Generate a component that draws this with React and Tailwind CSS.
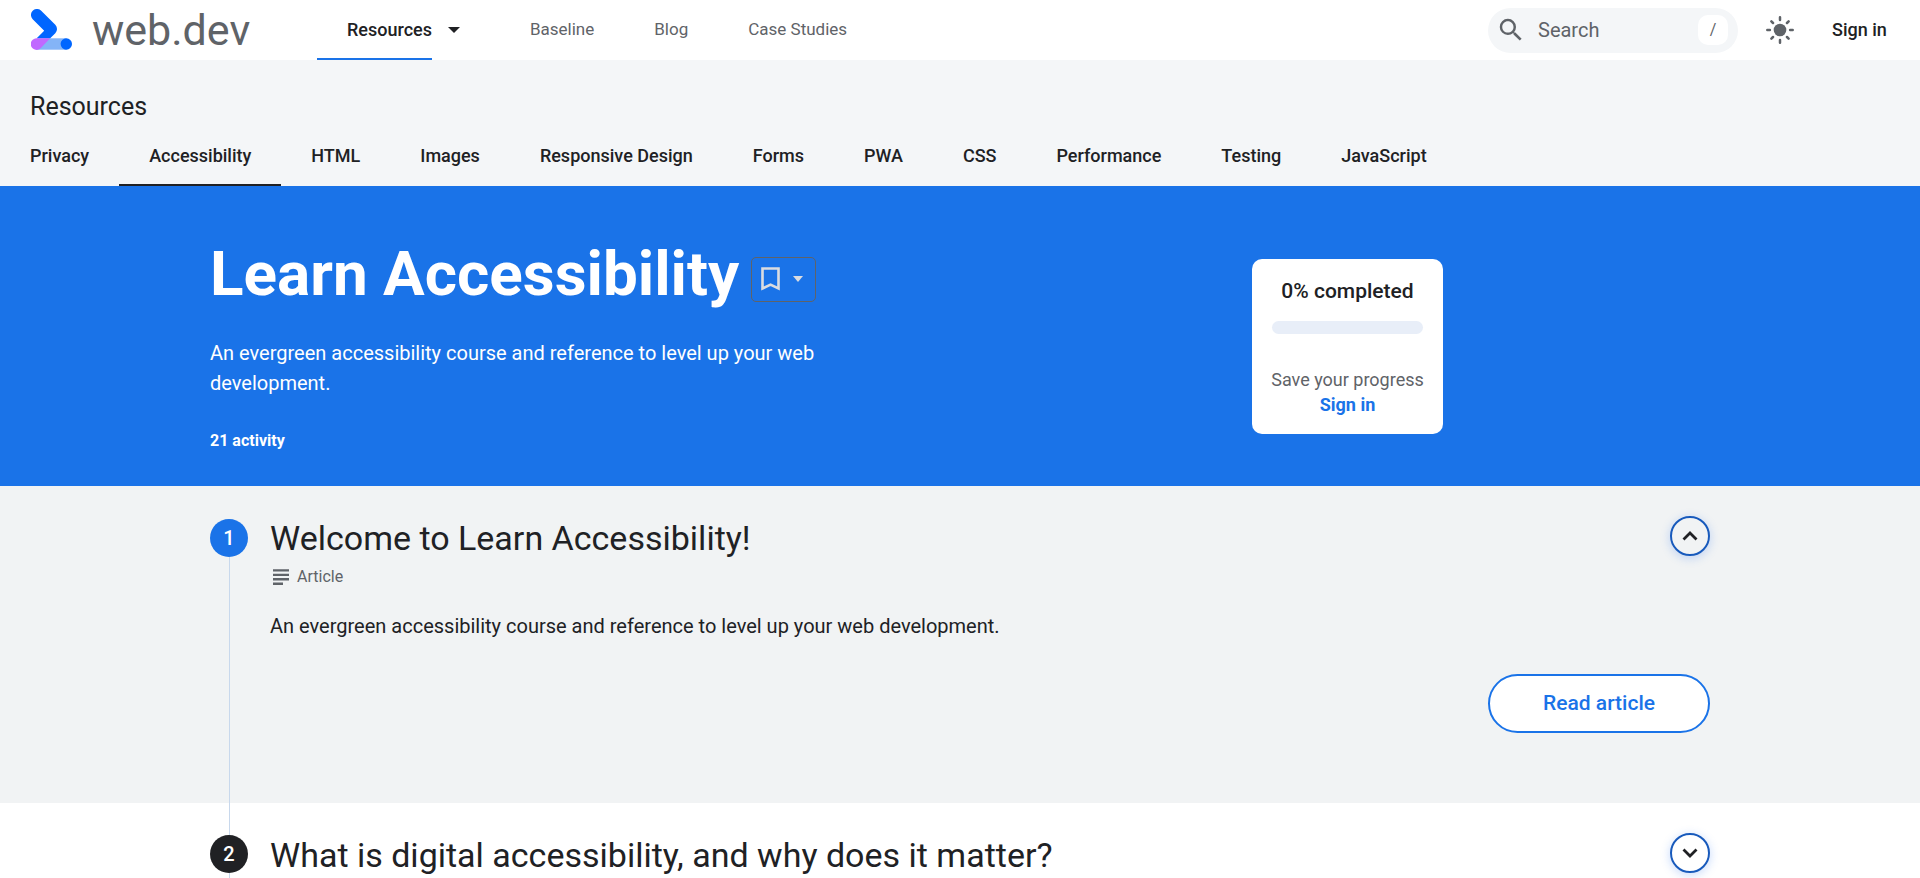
const TOPICS = [
  'Privacy',
  'Accessibility',
  'HTML',
  'Images',
  'Responsive Design',
  'Forms',
  'PWA',
  'CSS',
  'Performance',
  'Testing',
  'JavaScript',
];

const STEPS = [
  {
    number: 1,
    title: 'Welcome to Learn Accessibility!',
    kind: 'Article',
    text: 'An evergreen accessibility course and reference to level up your web development.',
    open: true,
  },
  {
    number: 2,
    title: 'What is digital accessibility, and why does it matter?',
    open: false,
  },
];

function Logo() {
  return (
    <svg className="mb-[2px]" width="41" height="41" viewBox="0 0 41 41" aria-hidden="true">
      <path d="M6 29.3H35.2V40.7H6z" fill="#84b4f7" />
      <path
        d="M1.7 10.2A6 6 0 0 1 10.2 1.7L24.3 15.8A6 6 0 0 1 24.3 24.2L19.2 29.3H5.7L13.2 21.8V21.7z"
        fill="#0066ff"
      />
      <path d="M5.8 29.3H19.2L9.8 39A5.8 5.8 0 1 1 5.8 29.3z" fill="#c069ff" />
      <circle cx="35.3" cy="35" r="5.7" fill="#0066ff" />
    </svg>
  );
}

function Caret({ className }) {
  return (
    <svg className={className} width="12" height="6" viewBox="0 0 12 6" aria-hidden="true">
      <path d="M0 0H12L6 6z" fill="currentColor" />
    </svg>
  );
}

function SearchIcon() {
  return (
    <svg width="30" height="30" viewBox="0 0 24 24" fill="currentColor" aria-hidden="true">
      <path d="M15.5 14h-.79l-.28-.27A6.47 6.47 0 0 0 16 9.5 6.5 6.5 0 1 0 9.5 16c1.61 0 3.09-.59 4.23-1.57l.27.28v.79l5 4.99L20.49 19l-4.99-5zm-6 0C7.01 14 5 11.99 5 9.5S7.01 5 9.5 5 14 7.01 14 9.5 11.99 14 9.5 14z" />
    </svg>
  );
}

function SunIcon() {
  return (
    <svg width="30" height="30" viewBox="0 0 30 30" aria-hidden="true">
      <circle cx="15" cy="15" r="6.3" fill="currentColor" />
      <path
        d="M15 2.3V4.9M15 25.1V27.7M2.3 15H4.9M25.1 15H27.7M6.4 6.4L8 8M22 22L23.6 23.6M6.4 23.6L8 22M22 8L23.6 6.4"
        stroke="currentColor"
        strokeWidth="2.5"
        strokeLinecap="round"
        fill="none"
      />
    </svg>
  );
}

function Header() {
  return (
    <header className="flex h-[60px] items-center bg-white pr-[30px] text-[#5f6368]">
      <a href="#home" className="flex w-[317px] items-center gap-5 pl-[31px] text-[43px] leading-[60px]">
        <Logo />
        <span>web.dev</span>
      </a>
      <nav aria-label="Main" className="flex h-full items-stretch text-[17px]">
        <a
          href="#resources"
          className="flex items-center border-b-2 border-[#1a73e8] pt-[2px] pl-[30px] text-lg font-medium text-[#202124]"
        >
          Resources
        </a>
        <button type="button" aria-label="Show resources menu" className="flex w-[68px] items-center pl-4 text-[#202124]">
          <Caret />
        </button>
        <a href="#baseline" className="flex items-center px-[30px]">Baseline</a>
        <a href="#blog" className="flex items-center px-[30px]">Blog</a>
        <a href="#case-studies" className="flex items-center px-[30px]">Case Studies</a>
      </nav>
      <div className="ml-auto flex h-[45px] w-[250px] items-center gap-2 rounded-full bg-[#f4f6f8] pr-[10px] pl-2">
        <SearchIcon />
        <input
          type="search"
          aria-label="Search"
          placeholder="Search"
          className="h-full w-0 flex-1 bg-transparent pl-1 text-xl outline-none placeholder:text-[#5f6368]"
        />
        <kbd className="flex size-[30px] items-center justify-center rounded-[10px] bg-white font-[Roboto] text-base">
          /
        </kbd>
      </div>
      <button type="button" aria-label="Theme" className="ml-[27px]">
        <SunIcon />
      </button>
      <a href="#signin" className="ml-[37px] w-[58px] text-lg font-medium whitespace-nowrap text-[#202124]">
        Sign in
      </a>
    </header>
  );
}

function TopicBar() {
  return (
    <div className="bg-[#f4f6f8] pt-[30px]">
      <div className="px-[30px] text-[25px] leading-[34px]">Resources</div>
      <nav aria-label="Resources" className="mt-3 flex h-[50px] text-lg font-medium">
        {TOPICS.map((topic) => (
          <a
            key={topic}
            href={'#' + topic.toLowerCase().replace(' ', '-')}
            className={
              topic === 'Accessibility'
                ? 'border-b-2 border-[#202124] px-[30px] pt-[6px] leading-7'
                : 'px-[30px] pt-[6px] leading-7'
            }
          >
            {topic}
          </a>
        ))}
      </nav>
    </div>
  );
}

function Hero() {
  return (
    <section className="bg-[#1a73e8] text-white">
      <div className="mx-auto grid h-[300px] max-w-[1500px] grid-cols-2 gap-[50px]">
        <div className="pt-[50px]">
          <div className="flex items-center gap-3">
            <h1 className="text-[62px] leading-[76px] font-bold">Learn Accessibility</h1>
            <button
              type="button"
              aria-label="Save this course"
              className="mt-[10px] flex h-[45px] w-[65px] items-center rounded-[5px] border border-[#5f6368] pl-[9px] text-[#dadce0]"
            >
              <svg width="19" height="24" viewBox="0 0 19 24" aria-hidden="true">
                <path d="M1.5 1.5H17.5V21.5L9.5 17.6L1.5 21.5z" fill="none" stroke="currentColor" strokeWidth="2.6" />
              </svg>
              <svg className="ml-[13px]" width="10" height="6" viewBox="0 0 10 6" aria-hidden="true">
                <path d="M0 0H10L5 6z" fill="currentColor" />
              </svg>
            </button>
          </div>
          <p className="mt-[26px] text-xl leading-[30px]">
            An evergreen accessibility course and reference to level up your web development.
          </p>
          <p className="mt-7 text-base leading-[30px] font-bold">21 activity</p>
        </div>
        <div className="mt-[73px] flex h-[175px] w-[191px] flex-col items-center justify-self-center rounded-[10px] bg-white px-5 text-[#202124]">
          <div className="pt-[18px] text-[21px] leading-7 font-medium">0% completed</div>
          <div
            role="progressbar"
            aria-label="Course progress"
            aria-valuenow={0}
            aria-valuemin={0}
            aria-valuemax={100}
            className="mt-4 h-[13px] w-full rounded-full bg-[#e8eef8]"
          />
          <div className="mt-[33px] text-lg leading-[25px] whitespace-nowrap text-[#5f6368]">Save your progress</div>
          <a href="#signin" className="text-lg leading-[25px] font-bold text-[#1a73e8]">Sign in</a>
        </div>
      </div>
    </section>
  );
}

function Step({ number, title, kind, text, open }) {
  return (
    <li className={open ? 'bg-[#f1f3f4]' : 'bg-white'}>
      <div className="mx-auto flex max-w-[1500px]">
        <div className="flex w-[38px] flex-col items-center">
          <div className={open ? 'h-[33px]' : 'h-8 w-px bg-[#c8d8ec]'} />
          <div
            className={
              open
                ? 'flex size-[38px] items-center justify-center rounded-full bg-[#1a73e8] text-xl font-medium text-white'
                : 'flex size-[38px] items-center justify-center rounded-full bg-[#202124] text-xl font-medium text-white'
            }
          >
            {number}
          </div>
          <div className="w-px flex-1 bg-[#c8d8ec]" />
        </div>
        <div className="flex-1 pt-[30px] pl-[22px]">
          <div className="flex items-start justify-between">
            <h2 className="text-[34px] leading-[45px]">{title}</h2>
            <button
              type="button"
              aria-expanded={open}
              aria-label={'Toggle ' + title}
              className="flex size-10 items-center justify-center rounded-full border-2 border-[#185abc] text-[#202124] shadow-[0_2px_8px_1px_rgba(66,133,244,0.25)]"
            >
              <svg width="16" height="10" viewBox="0 0 16 10" fill="none" aria-hidden="true">
                <path
                  d={open ? 'M1.5 8.5L8 2L14.5 8.5' : 'M1.5 1.5L8 8L14.5 1.5'}
                  stroke="currentColor"
                  strokeWidth="2.8"
                />
              </svg>
            </button>
          </div>
          {open ? (
            <>
              <div className="flex items-center gap-2 pt-px pl-[3px] text-base leading-[30px] text-[#5f6368]">
                <svg width="16" height="16" viewBox="0 0 16 16" fill="currentColor" aria-hidden="true">
                  <path d="M0 0.2H16V2.6H0zM0 4.7H16V7.1H0zM0 9.1H16V11.5H0zM0 13.5H10V15.9H0z" />
                </svg>
                {kind}
              </div>
              <p className="mt-[19px] text-xl leading-[30px]">{text}</p>
              <div className="flex justify-end pt-[33px] pb-[70px]">
                <a
                  href="#article"
                  className="flex h-[59px] w-[222px] items-center justify-center rounded-full border-2 border-[#1a73e8] bg-white text-[21px] font-medium text-[#1a73e8]"
                >
                  Read article
                </a>
              </div>
            </>
          ) : (
            <div className="h-[30px]" />
          )}
        </div>
      </div>
    </li>
  );
}

export default function App() {
  return (
    <div className="h-screen overflow-hidden bg-white font-[Roboto,sans-serif] text-[#202124]">
      <Header />
      <TopicBar />
      <main>
        <Hero />
        <ol>
          {STEPS.map((step) => (
            <Step key={step.number} {...step} />
          ))}
        </ol>
      </main>
    </div>
  );
}
